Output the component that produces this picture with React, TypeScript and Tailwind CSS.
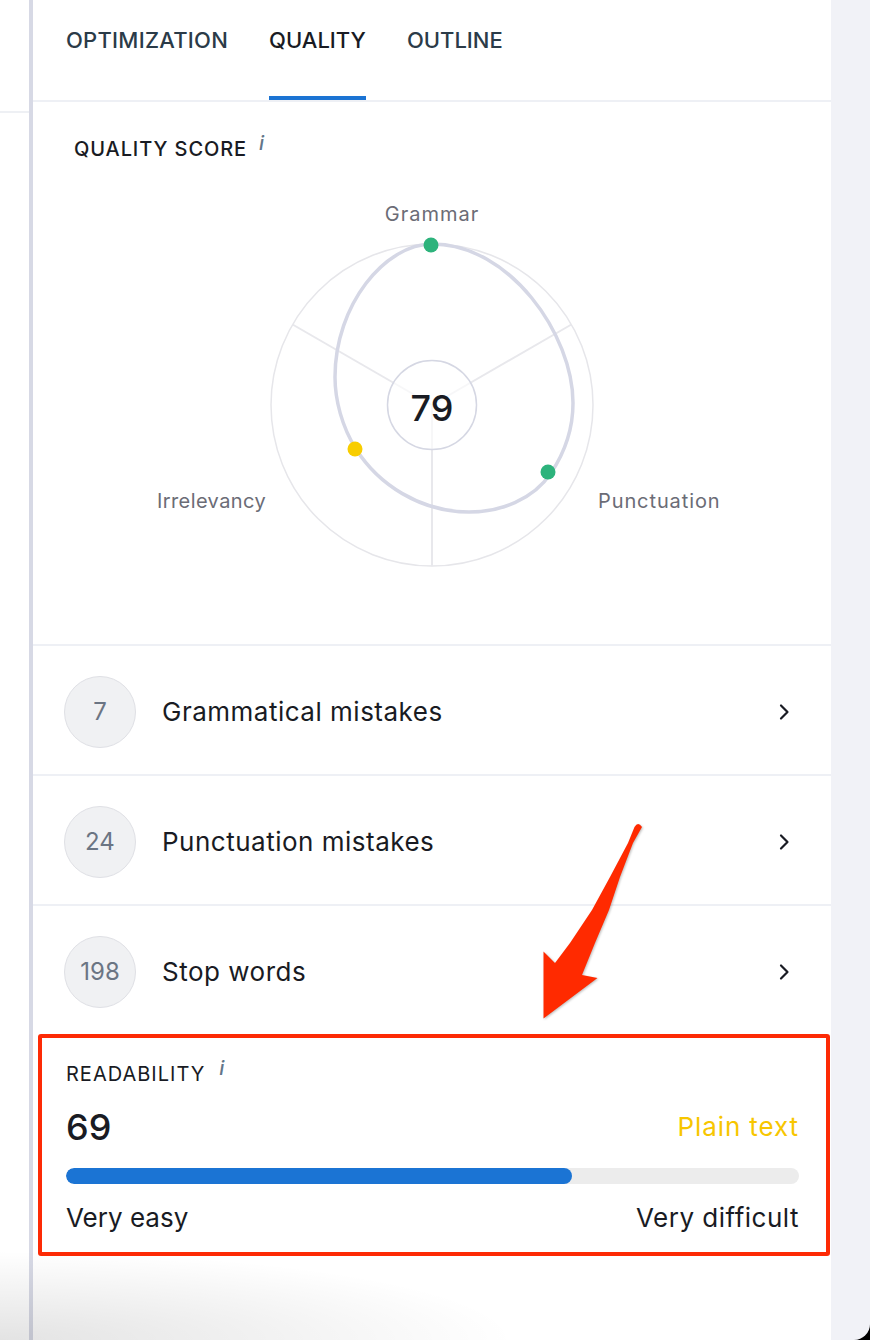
import React from "react";

function Chevron() {
  return (
    <svg width="14" height="18" viewBox="0 0 14 18" className="ml-auto shrink-0">
      <path d="M4 2.5 L10.5 9 L4 15.5" fill="none" stroke="#191b23" strokeWidth="2.2" strokeLinecap="round" strokeLinejoin="round" />
    </svg>
  );
}

function Row({ n, label, last }: { n: string; label: string; last?: boolean }) {
  return (
    <div className={`flex items-center pt-[3px] pl-[31px] pr-[40px] ${last ? "h-[128px]" : "h-[130px] border-b-2 border-[#eef0f5]"}`}>
      <div className="w-[72px] h-[72px] rounded-full bg-[#f0f1f3] border border-[#dfe0e5] flex items-center justify-center text-[24px] text-[#6b7583] shrink-0">
        {n}
      </div>
      <div className="ml-[26px] text-[26px] leading-[32px] tracking-[0.5px] text-[#191b23]">{label}</div>
      <Chevron />
    </div>
  );
}

const curve =
  "M432 244 C510 244 573 335 573 403 C573 433 563 455 551 473 C533 500 500 512 469 512 C420 512 378 484 356 449 C342 427 335 400 335 377 C335 305 385 244 432 244 Z";

export default function App() {
  return (
    <div className="relative w-[870px] h-[1340px] flex overflow-hidden bg-white font-['Inter',sans-serif] text-[#191b23]">
      {/* left strip */}
      <div className="w-[29px] shrink-0 bg-white">
        <div className="h-[113px] border-b-2 border-[#eef0f4]" />
      </div>
      <div className="w-[4px] shrink-0 bg-[#d7d9e5]" />

      {/* main panel */}
      <div className="w-[798px] shrink-0 flex flex-col bg-white">
        {/* tabs */}
        <div className="h-[102px] border-b-2 border-[#eef0f5] flex gap-[41px] pl-[33px]">
          <div className="h-[100px] pt-[26px] border-b-4 border-transparent text-[22px] leading-[28px] tracking-[0.25px] font-medium text-[#2b3b48]">OPTIMIZATION</div>
          <div className="h-[100px] pt-[26px] border-b-4 border-[#1b73d3] text-[22px] leading-[28px] font-medium text-[#191b23]">QUALITY</div>
          <div className="h-[100px] pt-[26px] border-b-4 border-transparent text-[22px] leading-[28px] font-medium text-[#2b3b48]">OUTLINE</div>
        </div>

        {/* quality score */}
        <div className="h-[544px] border-b-2 border-[#eef0f5] flex flex-col">
          <div className="pl-[41px] pt-[35px] flex items-start">
            <span className="text-[20px] leading-[24px] tracking-[0.9px] font-medium">QUALITY SCORE</span>
            <span className="ml-[12px] -mt-[6px] text-[20px] leading-[24px] italic font-medium text-[#62768a]">i</span>
          </div>
          <svg width="798" height="483" viewBox="33 161 798 483" className="block">
            <circle cx="432" cy="405" r="161" fill="none" stroke="#e6e6ea" strokeWidth="1.5" />
            <line x1="432" y1="405" x2="292.6" y2="324.5" stroke="#e8e8ec" strokeWidth="2" />
            <line x1="432" y1="405" x2="571.4" y2="324.5" stroke="#e8e8ec" strokeWidth="2" />
            <line x1="432" y1="405" x2="432" y2="566" stroke="#e8e8ec" strokeWidth="2" />
            <circle cx="432" cy="405" r="44.5" fill="#ffffff" fillOpacity="0.65" stroke="#d5d7e3" strokeWidth="1.5" />
            <path d={curve} fill="none" stroke="#d5d7e5" strokeWidth="3.5" />
            <circle cx="431" cy="245" r="7.5" fill="#2db37c" />
            <circle cx="355" cy="449" r="7.5" fill="#f8cd00" />
            <circle cx="548" cy="472" r="7.5" fill="#2db37c" />
            <text x="432" y="421" textAnchor="middle" fontSize="36" fontWeight="500" fill="#191b23" fontFamily="Inter, sans-serif">79</text>
            <text x="432" y="221" textAnchor="middle" fontSize="20" letterSpacing="1" fill="#6b6c76" fontFamily="Inter, sans-serif">Grammar</text>
            <text x="157" y="508" fontSize="20" letterSpacing="0.4" fill="#6b6c76" fontFamily="Inter, sans-serif">Irrelevancy</text>
            <text x="598" y="508" fontSize="20" letterSpacing="0.9" fill="#6b6c76" fontFamily="Inter, sans-serif">Punctuation</text>
          </svg>
        </div>

        {/* rows */}
        <Row n="7" label="Grammatical mistakes" />
        <Row n="24" label="Punctuation mistakes" />
        <Row n="198" label="Stop words" last />

        {/* readability */}
        <div className="ml-[5px] w-[792px] h-[222px] border-4 border-[#fd2a05] rounded-[3px] pl-[24px] pr-[27px] pt-[24px]">
          <div className="flex items-start">
            <span className="text-[20px] leading-[24px] tracking-[1px]">READABILITY</span>
            <span className="ml-[14px] -mt-[6px] text-[20px] leading-[24px] italic font-medium text-[#62768a]">i</span>
          </div>
          <div className="mt-[19px] h-[44px] flex items-center justify-between">
            <span className="text-[36px] leading-[44px] font-medium">69</span>
            <span className="text-[26px] leading-[32px] tracking-[0.9px] text-[#f7c600]">Plain text</span>
          </div>
          <div className="mt-[19px] h-[16px] rounded-full bg-[#ececec] overflow-hidden">
            <div className="h-full rounded-full bg-[#1b74d4]" style={{ width: "69%" }} />
          </div>
          <div className="mt-[18px] flex justify-between text-[26px] leading-[32px]">
            <span>Very easy</span>
            <span className="tracking-[0.5px]">Very difficult</span>
          </div>
        </div>
        <div className="flex-1" />
      </div>

      {/* right strip */}
      <div className="flex-1 bg-black">
        <div className="h-full bg-[#f1f2f7] rounded-br-[16px]" />
      </div>

      {/* bottom shadow */}
      <div className="pointer-events-none absolute left-0 bottom-0 w-[520px] h-[90px] bg-[radial-gradient(ellipse_at_bottom_left,rgba(0,0,0,0.11),rgba(0,0,0,0)_70%)]" />

      {/* annotation arrow */}
      <svg
        className="pointer-events-none absolute left-[530px] top-[815px] drop-shadow-[1px_1px_1px_rgba(0,0,0,0.25)]"
        width="130"
        height="215"
        viewBox="530 815 130 215"
      >
        <path
          d="M634.5 827 Q638 821 642 827 L633 843 L620 877 L609 910 L595 943 L582 975 L597.5 978 L543.5 1018.5 L543.5 951.5 L555 963 L570 943 L592 910 L610 877 L628 843 Z"
          fill="#ff2a00"
        />
      </svg>
    </div>
  );
}
